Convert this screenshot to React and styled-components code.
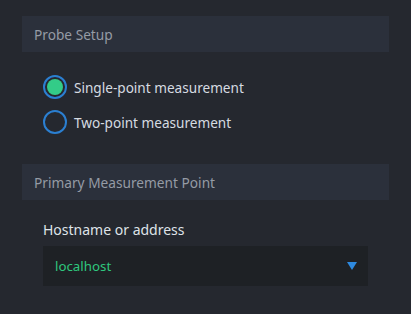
import React, { useState } from "react";
import styled, { createGlobalStyle } from "styled-components";

const GlobalStyle = createGlobalStyle`
  html, body {
    margin: 0;
    padding: 0;
    background: #25282f;
  }
  body {
    font-family: "Noto Sans", "Open Sans", sans-serif;
  }
`;

const Page = styled.div`
  width: 411px;
  height: 314px;
  box-sizing: border-box;
  padding: 16px 22px 0 22px;
  background: #25282f;
  display: flex;
  flex-direction: column;
`;

const SectionHeader = styled.div`
  height: 36px;
  display: flex;
  align-items: center;
  padding-left: 12px;
  background: #2b303b;
  color: #959ba5;
  font-size: 13.7px;
`;

const SectionBody = styled.div`
  display: flex;
  flex-direction: column;
  padding: ${({ $pad }) => $pad};
  gap: ${({ $gap }) => $gap || "0"};
`;

const RadioRow = styled.label`
  display: flex;
  align-items: center;
  gap: 7px;
  height: 24px;
  color: #d6dbe1;
  font-size: 13.6px;
  cursor: pointer;
`;

const RadioCircle = styled.span`
  width: 24px;
  height: 24px;
  box-sizing: border-box;
  border-radius: 50%;
  border: 2px solid #2b7fd1;
  display: flex;
  align-items: center;
  justify-content: center;
  &::after {
    content: "";
    width: 16px;
    height: 16px;
    border-radius: 50%;
    background: ${({ $checked }) => ($checked ? "#33cc88" : "transparent")};
  }
`;

const FieldLabel = styled.div`
  color: #dfe3e8;
  font-size: 14px;
  line-height: 20px;
  margin-bottom: 6px;
`;

const Select = styled.div`
  width: 325px;
  height: 40px;
  box-sizing: border-box;
  background: #1e2125;
  display: flex;
  align-items: center;
  justify-content: space-between;
  padding: 0 11px 0 12px;
  color: #2fc77e;
  font-size: 13.3px;
`;

const Caret = styled.span`
  width: 0;
  height: 0;
  border-left: 5px solid transparent;
  border-right: 5px solid transparent;
  border-top: 8px solid #2e8ae0;
`;

export default function App() {
  const [mode, setMode] = useState("single");

  return (
    <>
      <GlobalStyle />
      <Page>
        <SectionHeader>Probe Setup</SectionHeader>
        <SectionBody $pad="23px 0 30px 21px" $gap="11px">
          <RadioRow onClick={() => setMode("single")}>
            <RadioCircle $checked={mode === "single"} />
            Single-point measurement
          </RadioRow>
          <RadioRow onClick={() => setMode("two")}>
            <RadioCircle $checked={mode === "two"} />
            Two-point measurement
          </RadioRow>
        </SectionBody>
        <SectionHeader>Primary Measurement Point</SectionHeader>
        <SectionBody $pad="20px 0 0 21px">
          <FieldLabel>Hostname or address</FieldLabel>
          <Select>
            localhost
            <Caret />
          </Select>
        </SectionBody>
      </Page>
    </>
  );
}
